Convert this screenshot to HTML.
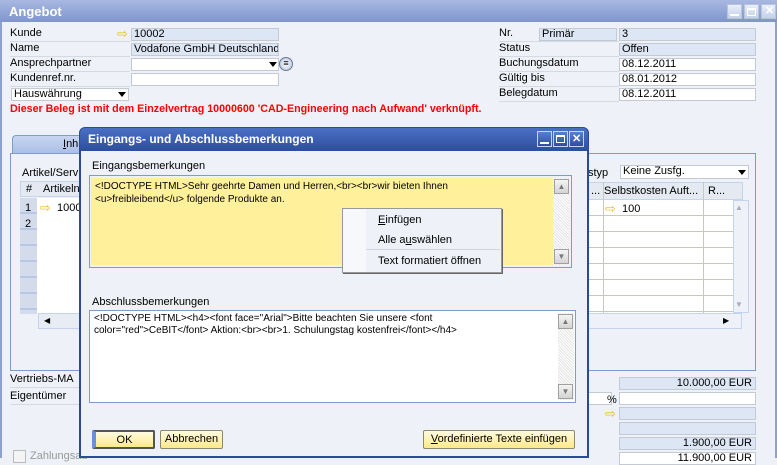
<!DOCTYPE html>
<html><head><meta charset="utf-8"><style>
*{box-sizing:border-box;margin:0;padding:0}
body{width:777px;height:458px;overflow:hidden;background:#eef1f7;font-family:"Liberation Sans",sans-serif;font-size:11px;color:#000;position:relative}
.a{position:absolute;white-space:nowrap}
.f{position:absolute;height:13px;border:1px solid #c4cad4;background:#dde6f5;padding-left:2px;line-height:11px;font-size:11px;white-space:nowrap;overflow:hidden}
.w{background:#fff}
.lbl{position:absolute;border-bottom:1px solid #d5dae2;height:15px;line-height:13px;white-space:nowrap}
.tb{position:absolute;width:15px;height:15px;border:1px solid #b8c4dc;background:linear-gradient(#e8eefa,#c4d0ea);top:4px}
.dtb{position:absolute;width:15px;height:16px;border:1px solid #c6d4f0;background:linear-gradient(#5a7fd0,#2d4e9e);top:131px}
.arrow{position:absolute;width:0;height:0;border-left:4px solid transparent;border-right:4px solid transparent;border-top:5px solid #000}
.ya{position:absolute;color:#e8c020;font-size:13px;line-height:12px}
.gl{position:absolute;background:#c8c8c0}
.sb{position:absolute;background:repeating-linear-gradient(45deg,#e4e4e4 0 1px,#fff 1px 2px)}
.sbb{position:absolute;width:15px;height:15px;background:linear-gradient(#f4f4f4,#d4d4d4);border:1px solid #a0a0a0;color:#777;font-size:8px;text-align:center;line-height:13px}
.btn{position:absolute;height:19px;border:1px solid #8a8a70;border-radius:2px;background:linear-gradient(#fffbe0,#ffe98a);text-align:center;line-height:17px}
</style></head><body>
<div class="a" style="left:0;top:0;width:777px;height:22px;background:linear-gradient(#a8b8e2,#7f95cc);"></div>
<div class="a" style="left:9px;top:4px;color:#fff;font-weight:bold;font-size:13px">Angebot</div>
<div class="tb" style="left:727px"></div><div class="tb" style="left:744px"></div><div class="tb" style="left:761px"></div>
<div class="a" style="left:730px;top:14px;width:9px;height:2px;background:#fff"></div>
<div class="a" style="left:747px;top:8px;width:9px;height:8px;border:1px solid #fff;border-top-width:2px"></div>
<div class="a" style="left:765px;top:4px;color:#fff;font-weight:bold;font-size:11px">✕</div>
<div class="a" style="left:0;top:22px;width:2px;height:436px;background:#8ea0cf"></div>
<div class="a" style="left:775px;top:22px;width:2px;height:436px;background:#8ea0cf"></div>

<div class="lbl" style="left:10px;top:27px;width:120px">Kunde</div>
<div class="lbl" style="left:10px;top:42px;width:120px">Name</div>
<div class="lbl" style="left:10px;top:57px;width:120px">Ansprechpartner</div>
<div class="lbl" style="left:10px;top:72px;width:120px">Kundenref.nr.</div>
<div class="ya" style="left:117px;top:28px">⇨</div>
<div class="f" style="left:131px;top:28px;width:148px">10002</div>
<div class="f" style="left:131px;top:43px;width:148px">Vodafone GmbH Deutschland</div>
<div class="f w" style="left:131px;top:58px;width:148px"></div>
<div class="arrow" style="left:269px;top:62px"></div>
<div class="a" style="left:279px;top:57px;width:14px;height:14px;border-radius:7px;border:1px solid #6a7a9a;background:radial-gradient(#fff,#b0bcd6);font-size:9px;text-align:center;line-height:11px">≡</div>
<div class="f w" style="left:131px;top:73px;width:148px"></div>
<div class="f w" style="left:11px;top:88px;width:118px;height:13px">Hauswährung</div>
<div class="arrow" style="left:118px;top:92px"></div>
<div class="a" style="left:10px;top:103px;color:#f00;font-weight:bold;font-size:10.7px">Dieser Beleg ist mit dem Einzelvertrag 10000600 'CAD-Engineering nach Aufwand' verknüpft.</div>

<div class="lbl" style="left:499px;top:27px;width:120px">Nr.</div>
<div class="lbl" style="left:499px;top:42px;width:120px">Status</div>
<div class="lbl" style="left:499px;top:57px;width:120px">Buchungsdatum</div>
<div class="lbl" style="left:499px;top:72px;width:120px">Gültig bis</div>
<div class="lbl" style="left:499px;top:87px;width:120px">Belegdatum</div>
<div class="f" style="left:539px;top:28px;width:78px">Primär</div>
<div class="f" style="left:619px;top:28px;width:137px">3</div>
<div class="f" style="left:619px;top:43px;width:137px">Offen</div>
<div class="f w" style="left:619px;top:58px;width:137px">08.12.2011</div>
<div class="f w" style="left:619px;top:73px;width:137px">08.01.2012</div>
<div class="f w" style="left:619px;top:88px;width:137px">08.12.2011</div>

<div class="a" style="left:12px;top:135px;width:80px;height:19px;border:1px solid #7f9cc8;border-bottom:none;background:linear-gradient(#c8d6f0,#a8bee6);border-radius:4px 4px 0 0;padding-left:50px;line-height:17px"><u>I</u>nh</div>
<div class="a" style="left:10px;top:153px;width:746px;height:218px;border:1px solid #7f9cc8;background:#eef1f7"></div>
<div class="a" style="left:22px;top:167px">Artikel/Servi</div>
<div class="a" style="left:20px;top:181px;width:62px;height:16px;background:#e4e9f2;border:1px solid #c4d4ec"></div>
<div class="a" style="left:26px;top:183px">#</div><div class="a" style="left:43px;top:183px">Artikelnr</div>
<div class="a" style="left:20px;top:198px;width:62px;height:116px;background:#fff"></div>
<div class="a" style="left:20px;top:198px;width:17px;height:116px;background:repeating-linear-gradient(#d4dcec 0 14px,#b8c8e4 14px 16px)"></div>
<div class="a" style="left:25px;top:202px">1</div><div class="a" style="left:25px;top:218px">2</div>
<div class="ya" style="left:40px;top:202px">⇨</div><div class="a" style="left:57px;top:202px">10000</div>
<div class="a" style="left:38px;top:313px;width:44px;height:16px;background:#e8edf5;border:1px solid #c4d4ec"></div>
<div class="a" style="left:44px;top:316px;font-size:8px">◀</div>

<div class="a" style="left:588px;top:167px">styp</div>
<div class="f w" style="left:620px;top:165px;width:129px;height:14px">Keine Zusfg.</div>
<div class="arrow" style="left:738px;top:170px"></div>
<div class="a" style="left:588px;top:182px;width:155px;height:18px;background:#e4e9f2;border:1px solid #c4d4ec"></div>
<div class="a" style="left:591px;top:185px">...</div>
<div class="a" style="left:604px;top:185px">Selbstkosten Auft...</div>
<div class="a" style="left:708px;top:185px">R...</div>
<div class="gl" style="left:603px;top:182px;width:1px;height:18px"></div>
<div class="gl" style="left:703px;top:182px;width:1px;height:18px"></div>
<div class="a" style="left:588px;top:200px;width:155px;height:113px;background:#fff;background-image:repeating-linear-gradient(transparent 0 15px,#c8c8c0 15px 16px)"></div>
<div class="gl" style="left:603px;top:200px;width:1px;height:113px"></div>
<div class="gl" style="left:703px;top:200px;width:1px;height:113px"></div>
<div class="ya" style="left:605px;top:203px">⇨</div><div class="a" style="left:622px;top:203px">100</div>
<div class="a" style="left:733px;top:200px;width:16px;height:113px;background:#eef2f8;border:1px solid #c4d4ec"></div>
<div class="a" style="left:735px;top:203px;font-size:8px;color:#aab">▲</div>
<div class="a" style="left:735px;top:300px;font-size:8px;color:#aab">▼</div>
<div class="a" style="left:588px;top:313px;width:154px;height:16px;background:#eef2f8;border:1px solid #c4d4ec"></div>
<div class="a" style="left:723px;top:316px;font-size:8px">▶</div>

<div class="lbl" style="left:10px;top:373px;width:75px">Vertriebs-MA</div>
<div class="lbl" style="left:10px;top:390px;width:75px">Eigentümer</div>
<div class="a" style="left:13px;top:450px;width:13px;height:13px;border:1px solid #bbb;background:#f4f4f4"></div>
<div class="a" style="left:30px;top:450px;color:#999">Zahlungsau</div>
<div class="f" style="left:619px;top:377px;width:137px;text-align:right;padding-right:3px">10.000,00 EUR</div>
<div class="f w" style="left:588px;top:392px;width:24px"></div>
<div class="a" style="left:607px;top:394px">%</div>
<div class="f w" style="left:619px;top:392px;width:137px"></div>
<div class="ya" style="left:605px;top:408px">⇨</div>
<div class="f" style="left:619px;top:407px;width:137px"></div>
<div class="f" style="left:619px;top:422px;width:137px"></div>
<div class="f" style="left:619px;top:437px;width:137px;text-align:right;padding-right:3px">1.900,00 EUR</div>
<div class="f w" style="left:619px;top:452px;width:137px;text-align:right;padding-right:3px">11.900,00 EUR</div>

<div class="a" style="left:79px;top:127px;width:510px;height:331px;background:#eef1f7;border:2px solid #2b4b97;border-radius:6px 6px 0 0"></div>
<div class="a" style="left:80px;top:128px;width:508px;height:23px;background:linear-gradient(#4a70c4,#2c4e9e);border-radius:5px 5px 0 0"></div>
<div class="a" style="left:88px;top:132px;color:#fff;font-weight:bold;font-size:12px">Eingangs- und Abschlussbemerkungen</div>
<div class="dtb" style="left:537px"></div><div class="dtb" style="left:553px"></div><div class="dtb" style="left:569px"></div>
<div class="a" style="left:540px;top:142px;width:9px;height:2px;background:#fff"></div>
<div class="a" style="left:556px;top:135px;width:9px;height:8px;border:1px solid #fff;border-top-width:2px"></div>
<div class="a" style="left:572px;top:132px;color:#fff;font-weight:bold;font-size:11px">✕</div>

<div class="a" style="left:92px;top:160px">Eingangsbemerkungen</div>
<div class="a" style="left:89px;top:175px;width:483px;height:93px;border:1px solid #7f9cc8;background:#eef1f7"></div>
<div class="a" style="left:91px;top:178px;width:462px;height:87px;background:#fff19c"></div>
<div class="a" style="left:95px;top:180px;line-height:13px;font-size:10px">&lt;!DOCTYPE HTML&gt;Sehr geehrte Damen und Herren,&lt;br&gt;&lt;br&gt;wir bieten Ihnen<br>&lt;u&gt;freibleibend&lt;/u&gt; folgende Produkte an.</div>
<div class="sb" style="left:553px;top:178px;width:16px;height:87px"></div>
<div class="sbb" style="left:554px;top:179px">▲</div>
<div class="sbb" style="left:554px;top:249px">▼</div>

<div class="a" style="left:342px;top:208px;width:160px;height:65px;background:#eef1f7;border:1px solid #999;box-shadow:1px 1px 0 #666"></div>
<div class="a" style="left:343px;top:209px;width:23px;height:63px;background:#f6f8fc"></div>
<div class="a" style="left:378px;top:214px"><u>E</u>infügen</div>
<div class="a" style="left:378px;top:234px">Alle a<u>u</u>swählen</div>
<div class="a" style="left:366px;top:249px;width:134px;height:1px;background:#d0d4dc"></div>
<div class="a" style="left:378px;top:255px">Text formatiert öffnen</div>

<div class="a" style="left:92px;top:296px">Abschlussbemerkungen</div>
<div class="a" style="left:89px;top:310px;width:487px;height:93px;border:1px solid #7f9cc8;background:#fff"></div>
<div class="a" style="left:94px;top:313px;line-height:12px;font-size:10px">&lt;!DOCTYPE HTML&gt;&lt;h4&gt;&lt;font face="Arial"&gt;Bitte beachten Sie unsere &lt;font<br>color="red"&gt;CeBIT&lt;/font&gt; Aktion:&lt;br&gt;&lt;br&gt;1. Schulungstag kostenfrei&lt;/font&gt;&lt;/h4&gt;</div>
<div class="sb" style="left:558px;top:313px;width:16px;height:87px"></div>
<div class="sbb" style="left:558px;top:314px">▲</div>
<div class="sbb" style="left:558px;top:384px">▼</div>

<div class="btn" style="left:92px;top:430px;width:63px;border:2px solid #555;border-left:4px solid #6a90d8">OK</div>
<div class="btn" style="left:160px;top:430px;width:63px">Abbrechen</div>
<div class="btn" style="left:423px;top:430px;width:152px"><u>V</u>ordefinierte Texte einfügen</div>
</body></html>
